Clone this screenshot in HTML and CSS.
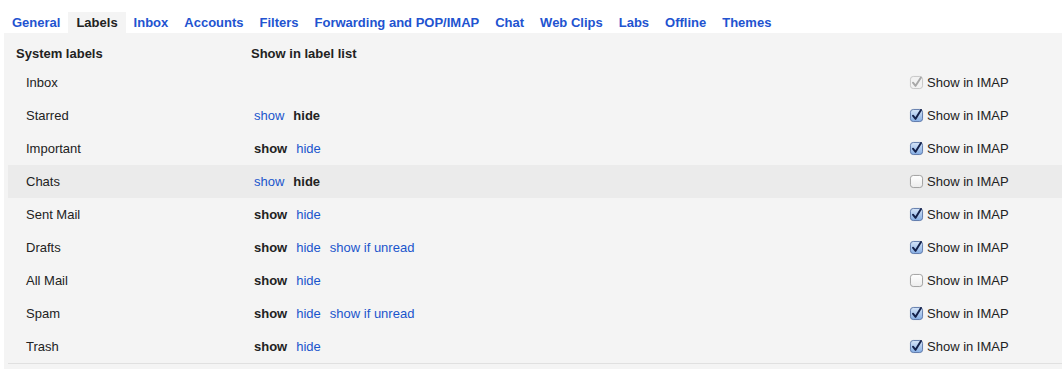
FILE: index.html
```html
<!DOCTYPE html>
<html>
<head>
<meta charset="utf-8">
<link rel="stylesheet" href="styles.css">
</head>
<body>
<div class="page">
  <nav class="tabs">
    <a class="tab">General</a>
    <a class="tab active">Labels</a>
    <a class="tab">Inbox</a>
    <a class="tab">Accounts</a>
    <a class="tab">Filters</a>
    <a class="tab">Forwarding and POP/IMAP</a>
    <a class="tab">Chat</a>
    <a class="tab">Web Clips</a>
    <a class="tab">Labs</a>
    <a class="tab">Offline</a>
    <a class="tab">Themes</a>
  </nav>
  <div class="panel">
    <div class="row head">
      <div class="c1">System labels</div>
      <div class="c2">Show in label list</div>
      <div class="c3"></div>
    </div>

    <div class="row">
      <div class="c1 name">Inbox</div>
      <div class="c2 opts"></div>
      <div class="c3"><span class="cb"><svg viewBox="0 0 14 14" width="13" height="13"><rect x="0.5" y="0.5" width="13" height="13" rx="3" fill="#f2f2f2" stroke="#c4c4c4"/><path d="M3.2 7.2 L6 10.6 L11.8 1.6" fill="none" stroke="#a8a8a8" stroke-width="2.1" stroke-linecap="round" stroke-linejoin="round"/></svg></span><span class="imap">Show in IMAP</span></div>
    </div>

    <div class="row">
      <div class="c1 name">Starred</div>
      <div class="c2 opts"><a class="lnk">show</a><b>hide</b></div>
      <div class="c3"><span class="cb"><svg viewBox="0 0 14 14" width="13" height="13"><defs><linearGradient id="g1" x1="0" y1="0" x2="0" y2="1"><stop offset="0" stop-color="#d6e5f8"/><stop offset="1" stop-color="#86aee4"/></linearGradient></defs><rect x="0.5" y="0.5" width="13" height="13" rx="3" fill="url(#g1)" stroke="#5a75a6"/><path d="M3.2 7.2 L6 10.6 L11.8 1" fill="none" stroke="#14214a" stroke-width="2.1" stroke-linecap="round" stroke-linejoin="round"/></svg></span><span class="imap">Show in IMAP</span></div>
    </div>

    <div class="row">
      <div class="c1 name">Important</div>
      <div class="c2 opts"><b>show</b><a class="lnk">hide</a></div>
      <div class="c3"><span class="cb"><svg viewBox="0 0 14 14" width="13" height="13"><rect x="0.5" y="0.5" width="13" height="13" rx="3" fill="url(#g1)" stroke="#5a75a6"/><path d="M3.2 7.2 L6 10.6 L11.8 1" fill="none" stroke="#14214a" stroke-width="2.1" stroke-linecap="round" stroke-linejoin="round"/></svg></span><span class="imap">Show in IMAP</span></div>
    </div>

    <div class="row hl">
      <div class="c1 name">Chats</div>
      <div class="c2 opts"><a class="lnk">show</a><b>hide</b></div>
      <div class="c3"><span class="cb"><svg viewBox="0 0 14 14" width="13" height="13"><defs><linearGradient id="g0" x1="0" y1="0" x2="0" y2="1"><stop offset="0" stop-color="#ffffff"/><stop offset="1" stop-color="#ececec"/></linearGradient></defs><rect x="0.5" y="0.5" width="13" height="13" rx="3" fill="url(#g0)" stroke="#9c9c9c"/></svg></span><span class="imap">Show in IMAP</span></div>
    </div>

    <div class="row">
      <div class="c1 name">Sent Mail</div>
      <div class="c2 opts"><b>show</b><a class="lnk">hide</a></div>
      <div class="c3"><span class="cb"><svg viewBox="0 0 14 14" width="13" height="13"><rect x="0.5" y="0.5" width="13" height="13" rx="3" fill="url(#g1)" stroke="#5a75a6"/><path d="M3.2 7.2 L6 10.6 L11.8 1" fill="none" stroke="#14214a" stroke-width="2.1" stroke-linecap="round" stroke-linejoin="round"/></svg></span><span class="imap">Show in IMAP</span></div>
    </div>

    <div class="row">
      <div class="c1 name">Drafts</div>
      <div class="c2 opts"><b>show</b><a class="lnk">hide</a><a class="lnk">show if unread</a></div>
      <div class="c3"><span class="cb"><svg viewBox="0 0 14 14" width="13" height="13"><rect x="0.5" y="0.5" width="13" height="13" rx="3" fill="url(#g1)" stroke="#5a75a6"/><path d="M3.2 7.2 L6 10.6 L11.8 1" fill="none" stroke="#14214a" stroke-width="2.1" stroke-linecap="round" stroke-linejoin="round"/></svg></span><span class="imap">Show in IMAP</span></div>
    </div>

    <div class="row">
      <div class="c1 name">All Mail</div>
      <div class="c2 opts"><b>show</b><a class="lnk">hide</a></div>
      <div class="c3"><span class="cb"><svg viewBox="0 0 14 14" width="13" height="13"><rect x="0.5" y="0.5" width="13" height="13" rx="3" fill="url(#g0)" stroke="#9c9c9c"/></svg></span><span class="imap">Show in IMAP</span></div>
    </div>

    <div class="row">
      <div class="c1 name">Spam</div>
      <div class="c2 opts"><b>show</b><a class="lnk">hide</a><a class="lnk">show if unread</a></div>
      <div class="c3"><span class="cb"><svg viewBox="0 0 14 14" width="13" height="13"><rect x="0.5" y="0.5" width="13" height="13" rx="3" fill="url(#g1)" stroke="#5a75a6"/><path d="M3.2 7.2 L6 10.6 L11.8 1" fill="none" stroke="#14214a" stroke-width="2.1" stroke-linecap="round" stroke-linejoin="round"/></svg></span><span class="imap">Show in IMAP</span></div>
    </div>

    <div class="row last">
      <div class="c1 name">Trash</div>
      <div class="c2 opts"><b>show</b><a class="lnk">hide</a></div>
      <div class="c3"><span class="cb"><svg viewBox="0 0 14 14" width="13" height="13"><rect x="0.5" y="0.5" width="13" height="13" rx="3" fill="url(#g1)" stroke="#5a75a6"/><path d="M3.2 7.2 L6 10.6 L11.8 1" fill="none" stroke="#14214a" stroke-width="2.1" stroke-linecap="round" stroke-linejoin="round"/></svg></span><span class="imap">Show in IMAP</span></div>
    </div>
  </div>
</div>
</body>
</html>
```

FILE: styles.css
```css
html, body {
  margin: 0;
  padding: 0;
  background: #ffffff;
}
body {
  font-family: "Liberation Sans", Arial, sans-serif;
  font-size: 13px;
  color: #222222;
  overflow: hidden;
}
.page {
  padding-left: 4px;
}
.tabs {
  display: flex;
  padding-top: 12px;
}
.tab {
  display: block;
  padding: 3px 8px 2px 8px;
  line-height: 16px;
  font-weight: bold;
  color: #2253d0;
  white-space: nowrap;
}
.tab.active {
  color: #222222;
  background: #f4f4f4;
}
.panel {
  background: #f4f4f4;
  padding-left: 4px;
  padding-bottom: 10px;
  width: 1054px;
}
.row {
  display: grid;
  grid-template-columns: 242px 1fr 152px;
  height: 33px;
  align-items: center;
  line-height: 16px;
}
.row.head {
  align-items: start;
  padding-top: 13px;
  height: 20px;
  font-weight: bold;
}
.row.head .c1 {
  padding-left: 8px;
}
.row.head .c2 {
  padding-left: 1px;
}
.row.hl {
  background: #ebebeb;
}
.row.last {
  border-bottom: 1px solid #e0e0e0;
}
.name {
  padding-left: 18px;
}
.opts {
  display: flex;
  gap: 9px;
  padding-left: 4px;
}
.opts b {
  font-weight: bold;
  color: #222222;
}
.lnk {
  color: #1a55cc;
}
.c3 {
  display: flex;
  align-items: center;
}
.cb {
  display: flex;
  width: 13px;
  height: 13px;
  margin-right: 4px;
}
.cb svg {
  overflow: visible;
}
.imap {
  white-space: nowrap;
}
```
